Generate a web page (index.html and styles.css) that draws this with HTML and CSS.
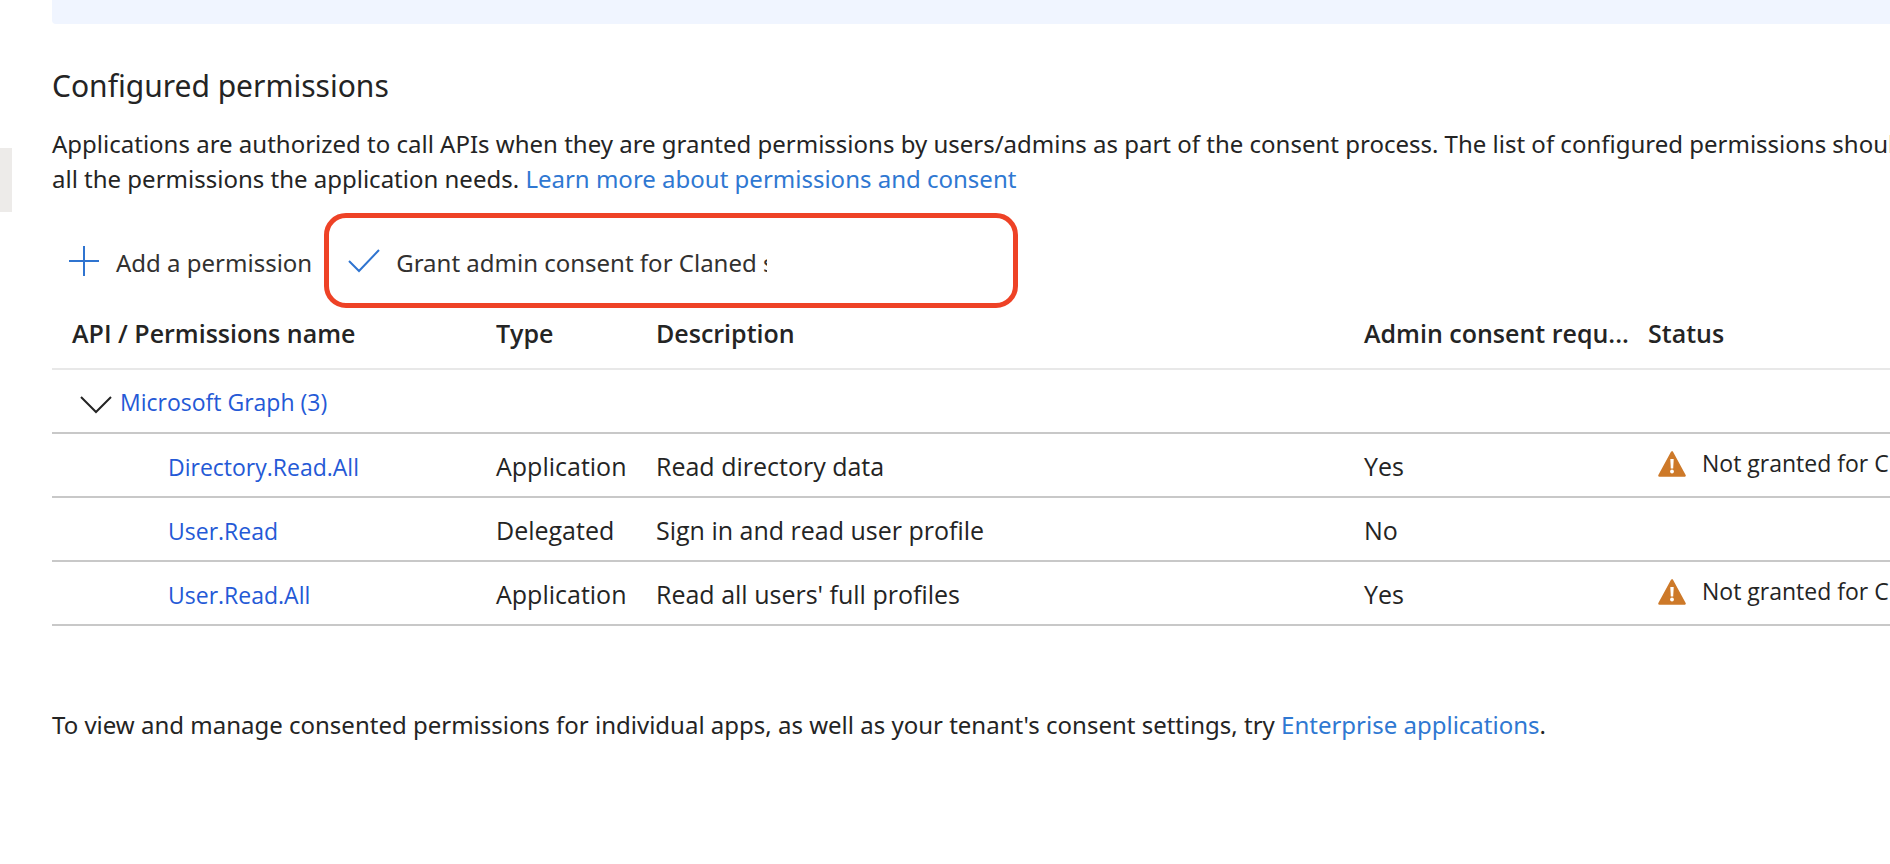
FILE: index.html
```html
<!DOCTYPE html>
<html lang="en">
<head>
<meta charset="utf-8">
<title>API permissions</title>
<link rel="stylesheet" href="styles.css">
</head>
<body>
<div class="page">
  <div class="side"><div class="side-handle"></div></div>
  <main class="content">
    <div class="banner"></div>
    <h1 class="title">Configured permissions</h1>
    <p class="intro">Applications are authorized to call APIs when they are granted permissions by users/admins as part of the consent process. The list of configured permissions should include<br>all the permissions the application needs. <a class="link" href="#">Learn more about permissions and consent</a></p>
    <div class="toolbar">
      <button class="command" type="button">
        <svg class="icon" viewBox="0 0 32 32" aria-hidden="true"><path d="M16 1v30M1 16h30" fill="none" stroke="#2f74d0" stroke-width="2"/></svg>
        <span class="command-label">Add a permission</span>
      </button>
      <div class="highlight">
        <button class="command" type="button">
          <svg class="icon" viewBox="0 0 32 32" aria-hidden="true"><path d="M1 16l10 10L31 5" fill="none" stroke="#2f74d0" stroke-width="2"/></svg>
          <span class="command-label command-label-cut">Grant admin consent for Claned s</span>
        </button>
      </div>
    </div>
    <table class="grid">
      <colgroup><col class="col-name"><col class="col-type"><col><col class="col-admin"><col class="col-status"></colgroup>
      <thead>
        <tr><th scope="col">API / Permissions name</th><th scope="col">Type</th><th scope="col">Description</th><th scope="col">Admin consent requ...</th><th scope="col">Status</th></tr>
      </thead>
      <tbody>
        <tr>
          <td class="group" colspan="5"><div class="group-row">
            <button class="toggle" type="button" aria-label="Collapse Microsoft Graph"><svg class="icon" viewBox="0 0 32 32" aria-hidden="true"><path d="M1 10l15 15L31 10" fill="none" stroke="#242424" stroke-width="2"/></svg></button>
            <a class="perm" href="#">Microsoft Graph (3)</a></div></td>
        </tr>
        <tr>
          <td><a class="perm" href="#">Directory.Read.All</a></td><td>Application</td><td>Read directory data</td><td>Yes</td>
          <td><div class="status"><svg class="warn" viewBox="0 0 28 26" aria-hidden="true"><path d="M14 1.500L26.500 24.500H1.500Z" fill="#cd7929" stroke="#cd7929" stroke-width="2.600" stroke-linejoin="round"/><path d="M12.300 8h3.400l-.5 9.500h-2.400z" fill="#fff"/><circle cx="14" cy="20.500" r="1.900" fill="#fff"/></svg><span>Not granted for Claned</span></div></td>
        </tr>
        <tr>
          <td><a class="perm" href="#">User.Read</a></td><td>Delegated</td><td>Sign in and read user profile</td><td>No</td><td></td>
        </tr>
        <tr>
          <td><a class="perm" href="#">User.Read.All</a></td><td>Application</td><td>Read all users' full profiles</td><td>Yes</td>
          <td><div class="status"><svg class="warn" viewBox="0 0 28 26" aria-hidden="true"><path d="M14 1.500L26.500 24.500H1.500Z" fill="#cd7929" stroke="#cd7929" stroke-width="2.600" stroke-linejoin="round"/><path d="M12.300 8h3.400l-.5 9.500h-2.400z" fill="#fff"/><circle cx="14" cy="20.500" r="1.900" fill="#fff"/></svg><span>Not granted for Claned</span></div></td>
        </tr>
      </tbody>
    </table>
    <p class="footnote">To view and manage consented permissions for individual apps, as well as your tenant's consent settings, try <a class="link" href="#">Enterprise applications</a>.</p>
  </main>
</div>
</body>
</html>
```
FILE: styles.css
```css
* { box-sizing: border-box; }
body {
  margin: 0;
  background: #fff;
  color: #242424;
  font-family: "Noto Sans", "Open Sans", sans-serif;
  font-size: 24px;
  line-height: 35px;
}
.page { display: flex; min-height: 100vh; overflow: hidden; }
.side { flex: 0 0 52px; padding-top: 148px; }
.side-handle { width: 12px; height: 64px; background: #edebe9; }
.content { flex: 1; min-width: 0; }
.banner { height: 24px; background: #f0f5ff; border-bottom-left-radius: 4px; }
.title { margin: 40px 0 0; font-size: 30px; line-height: 44px; font-weight: 400; }
.intro { margin: 18px 0 0; white-space: nowrap; }
.link { color: #2f78d2; text-decoration: none; }
.toolbar { display: flex; align-items: center; margin-top: 17px; padding-left: 16px; }
.command {
  display: flex;
  align-items: center;
  gap: 16px;
  padding: 0;
  border: 0;
  background: none;
  color: #323130;
  font: inherit;
  white-space: nowrap;
}
.icon { display: block; flex: none; width: 32px; height: 32px; }
.highlight {
  display: flex;
  align-items: center;
  width: 694px;
  height: 95px;
  margin-left: 12px;
  padding-left: 19px;
  border: 5px solid #ee4226;
  border-radius: 22px;
}
.command-label { padding-top: 3px; }
.command-label-cut { width: 371px; overflow: hidden; text-align: left; }
.grid { width: 100%; table-layout: fixed; border-collapse: separate; border-spacing: 0; font-family: "Open Sans", "Noto Sans", sans-serif; font-size: 25px; }
.col-name { width: 434px; }
.col-type { width: 160px; }
.col-admin { width: 284px; }
.col-status { width: 252px; }
.grid th {
  height: 62px;
  padding: 0 0 10px 10px;
  border-bottom: 2px solid #e8e8e8;
  font-weight: 600;
  text-align: left;
  white-space: nowrap;
}
.grid th:first-child { padding-left: 20px; }
.grid td { height: 64px; padding: 3px 0 0 10px; border-bottom: 2px solid #c8c8c8; white-space: nowrap; }
.grid td:first-child { padding-left: 116px; }
.grid td.group { padding: 3px 0 0 28px; }
.group-row { display: flex; align-items: center; gap: 8px; }
.toggle { padding: 0; border: 0; background: none; }
.perm { color: #2459d6; font-size: 23px; text-decoration: none; }
.status { display: flex; align-items: center; gap: 16px; padding: 0 0 6px 10px; overflow: hidden; font-size: 23px; }
.warn { flex: none; width: 28px; height: 26px; }
.footnote { margin: 81px 0 0; white-space: nowrap; }
```
